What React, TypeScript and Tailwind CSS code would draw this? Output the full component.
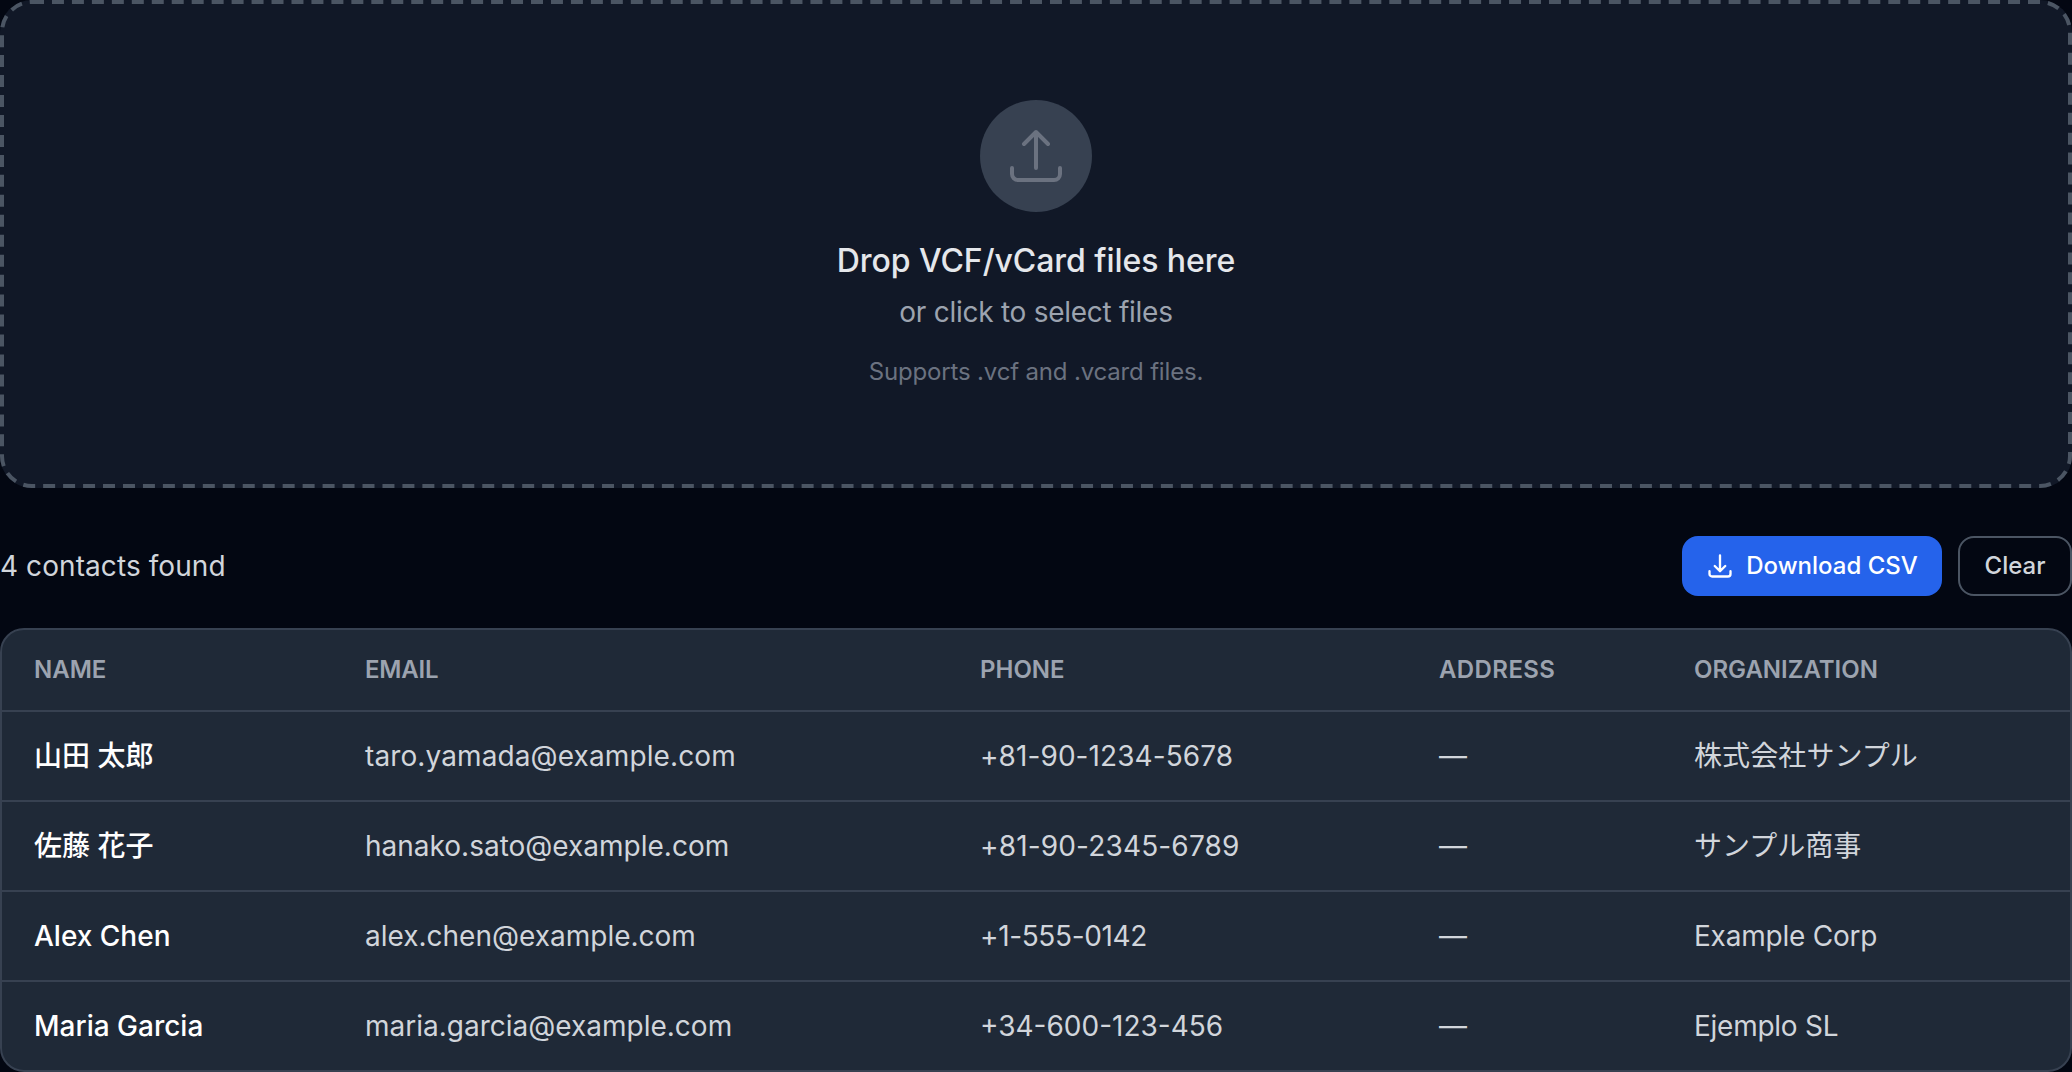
const contacts = [
  { name: "山田 太郎", email: "taro.yamada@example.com", emailT: "tracking-[0.11px]", phone: "+81-90-1234-5678", phoneT: "tracking-[0.08px]", address: "—", org: "株式会社サンプル", orgT: "tracking-[0.1px]" },
  { name: "佐藤 花子", email: "hanako.sato@example.com", emailT: "", phone: "+81-90-2345-6789", phoneT: "tracking-[0.16px]", address: "—", org: "サンプル商事", orgT: "" },
  { name: "Alex Chen", email: "alex.chen@example.com", emailT: "", phone: "+1-555-0142", phoneT: "tracking-[-0.36px]", address: "—", org: "Example Corp", orgT: "tracking-[-0.22px]" },
  { name: "Maria Garcia", email: "maria.garcia@example.com", emailT: "", phone: "+34-600-123-456", phoneT: "", address: "—", org: "Ejemplo SL", orgT: "tracking-[-0.26px]" },
];

const th = "px-[32px] py-[24px] text-left text-[24px] leading-[32px] font-semibold uppercase text-[#9ca3af]";
const td = "px-[32px] py-[24px] text-[28px] leading-[40px] text-[#d1d5db] whitespace-nowrap";

export default function App() {
  return (
    <div className="min-h-[1072px] bg-[#030712] font-['Inter','Noto_Sans_CJK_JP',sans-serif]">
      <div className="relative flex h-[488px] flex-col items-center rounded-[32px] bg-[#111827] px-[96px] pt-[100px]">
        <svg className="pointer-events-none absolute inset-0 h-full w-full" fill="none">
          <rect x="2" y="2" width="2068" height="484" rx="30" stroke="#4b5563" strokeWidth="4" strokeDasharray="12 7.96" />
        </svg>
        <div className="flex h-[112px] w-[112px] items-center justify-center rounded-full bg-[#374151]">
          <svg viewBox="0 0 24 24" fill="none" stroke="#6b7280" strokeWidth="1.5" strokeLinecap="round" strokeLinejoin="round" className="h-[64px] w-[64px]">
            <path d="M3 16.5v2.25A2.25 2.25 0 0 0 5.25 21h13.5A2.25 2.25 0 0 0 21 18.75V16.5m-13.5-9L12 3m0 0 4.5 4.5M12 3v13.5" />
          </svg>
        </div>
        <p className="mt-[25px] text-[32px] leading-[48px] font-medium tracking-[-0.05px] text-[#e5e7eb]">Drop VCF/vCard files here</p>
        <p className="mt-[7px] text-[28px] leading-[40px] tracking-[-0.27px] text-[#9ca3af]">or click to select files</p>
        <p className="mt-[24px] text-[24px] leading-[32px] tracking-[-0.17px] text-[#6b7280]">Supports .vcf and .vcard files.</p>
      </div>

      <div className="mt-[48px] flex items-center justify-between">
        <p className="text-[28px] leading-[40px] tracking-[0.08px] text-[#d1d5db]">4 contacts found</p>
        <div className="flex gap-[16px]">
          <button className="flex h-[60px] w-[260px] items-center justify-center gap-[12px] rounded-[16px] bg-[#2563eb] text-[24px] leading-[32px] font-medium text-white">
            <svg viewBox="0 0 24 24" fill="none" stroke="currentColor" strokeWidth="2" strokeLinecap="round" strokeLinejoin="round" className="h-[28px] w-[28px]">
              <path d="M3 16.5v2.25A2.25 2.25 0 0 0 5.25 21h13.5A2.25 2.25 0 0 0 21 18.75V16.5M16.5 12 12 16.5m0 0L7.5 12m4.5 4.5V3" />
            </svg>
            Download CSV
          </button>
          <button className="h-[60px] w-[114px] rounded-[16px] border-[2px] border-[#4b5563] text-[24px] leading-[32px] font-medium text-[#d1d5db]">Clear</button>
        </div>
      </div>

      <div className="mt-[32px] overflow-hidden rounded-[24px] border-[2px] border-[#374151] bg-[#1f2937]">
        <table className="w-full table-fixed border-collapse">
          <colgroup>
            <col className="w-[331px]" />
            <col className="w-[615px]" />
            <col className="w-[459px]" />
            <col className="w-[255px]" />
            <col />
          </colgroup>
          <thead>
            <tr>
              <th className={th}>Name</th>
              <th className={th + " tracking-[-0.2px]"}>Email</th>
              <th className={th}>Phone</th>
              <th className={th + " tracking-[0.4px]"}>Address</th>
              <th className={th}>Organization</th>
            </tr>
          </thead>
          <tbody>
            {contacts.map((c) => (
              <tr key={c.email} className="border-t-[2px] border-[#374151]">
                <td className={td + " font-medium text-white"}>{c.name}</td>
                <td className={td + " " + c.emailT}>{c.email}</td>
                <td className={td + " " + c.phoneT}>{c.phone}</td>
                <td className={td}>{c.address}</td>
                <td className={td + " " + c.orgT}>{c.org}</td>
              </tr>
            ))}
          </tbody>
        </table>
      </div>
    </div>
  );
}
